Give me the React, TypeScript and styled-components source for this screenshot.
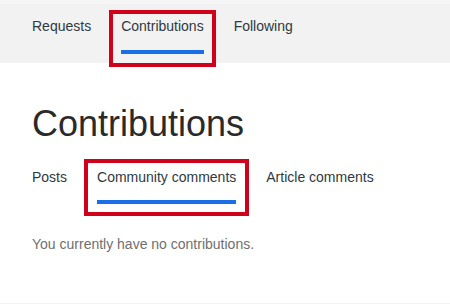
import React from "react";
import styled, { createGlobalStyle } from "styled-components";

const GlobalStyle = createGlobalStyle`
  html, body { margin: 0; padding: 0; background: #ffffff; }
  body { font-family: "Liberation Sans", Arial, sans-serif; }
  * { box-sizing: border-box; }
`;

const Page = styled.div`
  width: 450px;
  display: flex;
  flex-direction: column;
`;

const TopStrip = styled.div`
  height: 4px;
  background: #f6f6f6;
`;

const NavBar = styled.nav`
  background: #f2f2f2;
  display: flex;
  gap: 30px;
  padding: 12px 32px 9px;
`;

const TabList = styled.div`
  display: flex;
  gap: 30px;
`;

const Tab = styled.a<{ $active?: boolean; $sub?: boolean }>`
  position: relative;
  display: flex;
  flex-direction: column;
  font-size: 14px;
  line-height: 20px;
  color: #2f3941;
  text-decoration: none;
  cursor: pointer;

  &::after {
    content: "";
    display: block;
    height: 4px;
    margin-top: ${(p) => (p.$sub ? "13px" : "14px")};
    background: ${(p) => (p.$active ? "#1a6fe6" : "transparent")};
  }
`;

const Highlight = styled.span<{ $top: number; $side: number; $bottom: number }>`
  position: absolute;
  top: ${(p) => -p.$top}px;
  left: ${(p) => -p.$side}px;
  right: ${(p) => -p.$side}px;
  bottom: ${(p) => -p.$bottom}px;
  border: 4px solid #d0021b;
  pointer-events: none;
`;

const Main = styled.main`
  padding: 39px 32px 49px;
  display: flex;
  flex-direction: column;
`;

const Title = styled.h1`
  margin: 0;
  font-size: 36px;
  line-height: 43px;
  font-weight: 400;
  color: #2a2a2a;
`;

const SubTabs = styled(TabList)`
  margin-top: 22px;
`;

const Empty = styled.p`
  margin: 30px 0 0;
  font-size: 14px;
  line-height: 20px;
  color: #6f6f6f;
`;

const Footer = styled.footer`
  height: 4px;
  background: #f4f4f4;
`;

export default function App() {
  return (
    <>
      <GlobalStyle />
      <Page>
        <TopStrip />
        <NavBar>
          <Tab>Requests</Tab>
          <Tab $active>
            Contributions
            <Highlight $top={6} $side={12} $bottom={13} />
          </Tab>
          <Tab>Following</Tab>
        </NavBar>
        <Main>
          <Title>Contributions</Title>
          <SubTabs>
            <Tab $sub>Posts</Tab>
            <Tab $sub $active>
              Community comments
              <Highlight $top={8} $side={13} $bottom={12} />
            </Tab>
            <Tab $sub>Article comments</Tab>
          </SubTabs>
          <Empty>You currently have no contributions.</Empty>
        </Main>
        <Footer />
      </Page>
    </>
  );
}
